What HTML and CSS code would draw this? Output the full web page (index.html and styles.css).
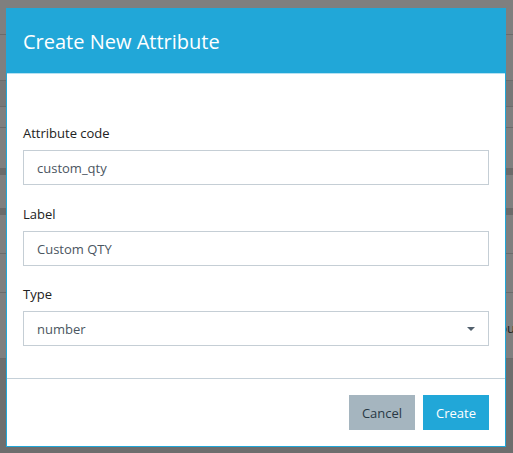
FILE: index.html
```html
<!DOCTYPE html>
<html>
<head>
<meta charset="utf-8">
<link rel="stylesheet" href="styles.css">
</head>
<body>
<div class="backdrop">
  <div class="bg-row r1"></div>
  <div class="bg-row r2"></div>
  <div class="bg-row r3"></div>
  <div class="bg-row r4"></div>
  <div class="bg-row r5"></div>
  <div class="bg-band"></div>
  <div class="bg-row r6"></div>
  <div class="bg-band"></div>
  <div class="bg-row r7"></div>
  <div class="bg-row r8"></div>
  <div class="bg-row r9"><span class="bg-text">ou</span></div>
  <div class="bg-rest"></div>
</div>

<div class="modal">
  <div class="modal-header">
    <h1 class="modal-title">Create New Attribute</h1>
  </div>
  <div class="modal-body">
    <div class="field field-first">
      <label class="field-label">Attribute code</label>
      <div class="input">custom_qty</div>
    </div>
    <div class="field">
      <label class="field-label">Label</label>
      <div class="input">Custom QTY</div>
    </div>
    <div class="field">
      <label class="field-label">Type</label>
      <div class="input select">
        <span>number</span>
        <span class="caret"></span>
      </div>
    </div>
  </div>
  <div class="modal-footer">
    <button class="btn btn-cancel">Cancel</button>
    <button class="btn btn-create">Create</button>
  </div>
</div>
</body>
</html>
```

FILE: styles.css
```css
html, body {
  margin: 0;
  padding: 0;
}
body {
  width: 513px;
  height: 453px;
  overflow: hidden;
  position: relative;
  background: #6e6e6e;
  font-family: "Open Sans", "DejaVu Sans", sans-serif;
}

/* dimmed page behind the dialog */
.backdrop {
  display: flex;
  flex-direction: column;
}
.bg-row {
  background: #7f7f7f;
  border-bottom: 1px solid #6b6b6b;
}
.r1 { height: 34px; }
.r2 { height: 45px; }
.r3 { height: 25px; background: #777777; }
.r4 { height: 20px; }
.r5 { height: 40px; border-bottom: 0; }
.r6 { height: 33px; border-bottom: 0; }
.r7 { height: 38px; }
.r8 { height: 38px; }
.r9 {
  height: 65px;
  display: flex;
  justify-content: flex-end;
  align-items: center;
}
.bg-band {
  height: 7px;
  background: #6a6a6a;
}
.bg-rest {
  height: 100px;
  background: #6e6e6e;
}
.bg-text {
  font-size: 13px;
  line-height: 16px;
  color: #1c1c1c;
  margin-right: -2px;
  margin-top: 4px;
}

/* dialog */
.modal {
  position: absolute;
  left: 6px;
  top: 8px;
  width: 498px;
  background: #ffffff;
  border: 1px solid #21a7d8;
  border-top: 0;
}
.modal-header {
  background: #21a7d8;
  padding: 20px 16px 17px;
  border-bottom: 1px solid #b5e1f2;
}
.modal-title {
  margin: 0;
  font-weight: 400;
  font-size: 20px;
  line-height: 28px;
  color: #ffffff;
}
.modal-body {
  padding: 50px 16px 32px;
}
.field {
  display: flex;
  flex-direction: column;
  gap: 8px;
  margin-bottom: 19px;
}
.field-first {
  margin-bottom: 20px;
}
.field:last-child {
  margin-bottom: 0;
}
.field-label {
  font-size: 13px;
  line-height: 18px;
  color: #222222;
}
.input {
  height: 35px;
  box-sizing: border-box;
  border: 1px solid #c5ced5;
  padding: 0 13px;
  display: flex;
  align-items: center;
  font-size: 13px;
  color: #4b5661;
}
.select {
  justify-content: space-between;
}
.caret {
  width: 0;
  height: 0;
  border-left: 4px solid transparent;
  border-right: 4px solid transparent;
  border-top: 4px solid #52606d;
}
.modal-footer {
  border-top: 1px solid #c5d0d8;
  padding: 16px;
  display: flex;
  justify-content: flex-end;
  gap: 8px;
}
.btn {
  width: 66px;
  height: 35px;
  border: 0;
  font-family: "Open Sans", "DejaVu Sans", sans-serif;
  font-size: 13px;
  padding: 0;
  cursor: pointer;
}
.btn-cancel {
  background: #a5b5bf;
  color: #283845;
}
.btn-create {
  background: #21a7d8;
  color: #ffffff;
}
```
